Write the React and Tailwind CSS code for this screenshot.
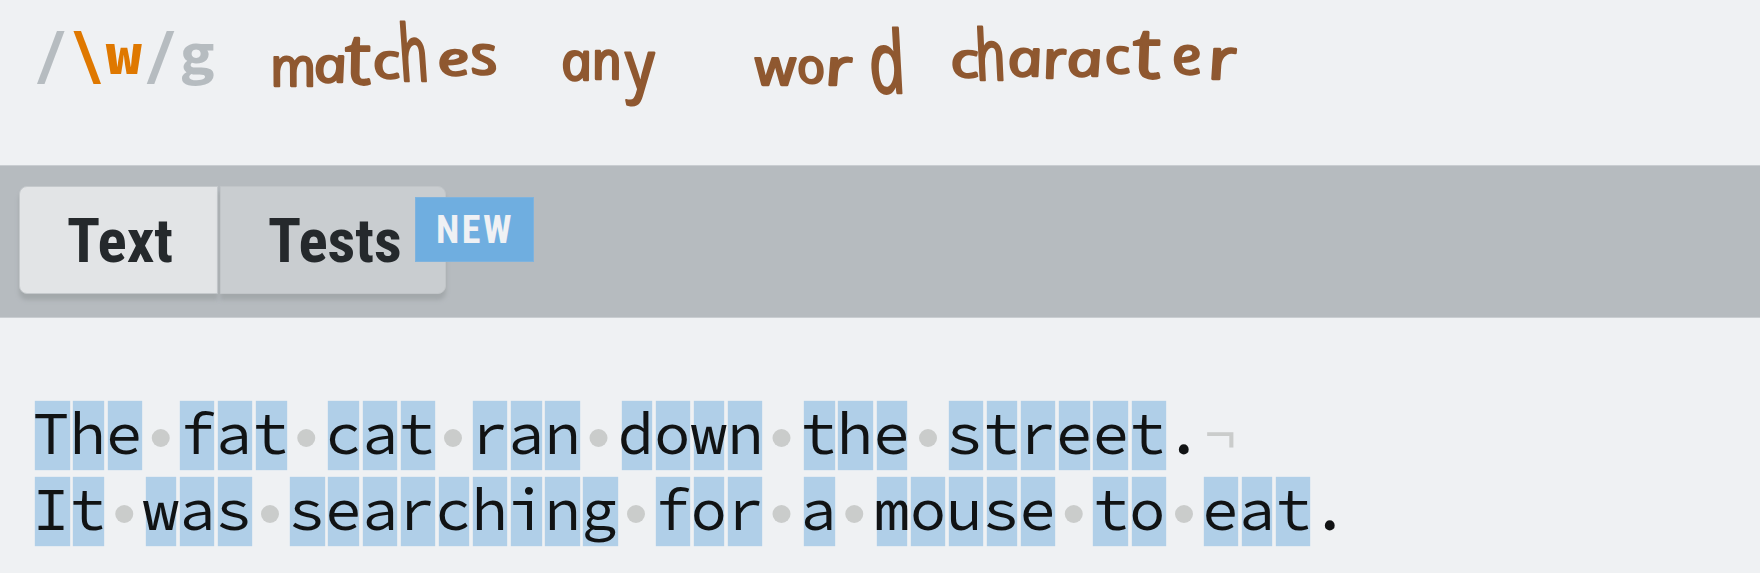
const UNIT = 3.807;
const MONO = "font-['Source_Code_Pro','Noto_Sans_Mono_CJK_SC','Liberation_Mono',monospace]";

const LINES = [
  'The fat cat ran down the street.¬',
  'It was searching for a mouse to eat.',
];

// Each letter: [character, x, baseline, width, size]
const WORDS = [
  [['m', 271, 86, 46, 54], ['a', 315, 82, 33, 48], ['t', 348, 84, 25, 70], ['c', 375, 78, 27, 48], ['h', 402, 81, 30, 78], ['e', 440, 75, 32, 46], ['s', 474, 74, 27, 54]],
  [['a', 563, 80, 31, 53], ['n', 594, 79, 30, 52], ['y', 627, 89, 29, 68]],
  [['w', 756, 85, 41, 50], ['o', 798, 83, 28, 48], ['r', 826, 85, 27, 50], ['d', 870, 93, 37, 86]],
  [['c', 953, 77, 28, 48], ['h', 978, 80, 31, 70], ['a', 1010, 76, 35, 50], ['r', 1045, 78, 24, 52], ['a', 1069, 76, 36, 48], ['c', 1108, 73, 25, 48], ['t', 1137, 78, 27, 70], ['e', 1175, 74, 30, 52], ['r', 1210, 79, 29, 56]],
];

function Note() {
  return (
    <svg className="absolute left-0 top-0 h-[130px] w-[1280px] overflow-visible" viewBox="0 0 1280 130">
      <g
        className="fill-[#8f5830] stroke-[#8f5830] font-['Open_Sans',sans-serif] italic font-normal"
        strokeWidth="2.4"
        strokeLinejoin="round"
        transform="translate(-16 0) skewX(12)"
      >
        {WORDS.map((word, i) => (
          <text key={i}>
            {word.map(([ch, x, y, w, size], j) => (
              <tspan key={j} x={x} y={y} fontSize={size} textLength={w} lengthAdjust="spacingAndGlyphs">
                {ch}
              </tspan>
            ))}
          </text>
        ))}
      </g>
    </svg>
  );
}

function Glyph({ ch, index }) {
  const start = Math.round(index * 9.6);
  const width = (Math.round((index + 1) * 9.6) - start) * UNIT;
  const shift = (index * 9.6 - start) * UNIT - 2.6;
  const isWord = /\w/.test(ch);
  return (
    <span className="flex h-[69px] shrink-0 pr-[3.8px]" style={{ width }}>
      <span className={`flex w-full ${isWord ? 'bg-[#b0cfe8] shadow-[0_0_1px_#b0cfe8]' : ''}`}>
        {ch === ' ' ? (
          <span
            className="mt-[28px] size-[18px] shrink-0 rounded-full bg-[#cacccb]"
            style={{ transform: `translateX(${shift + 9.1}px)` }}
          />
        ) : (
          <span
            className={`relative z-10 w-[36.55px] shrink-0 text-center leading-[63px] ${ch === '¬' ? 'text-[#cacccb]' : 'text-[#111314]'}`}
            style={{ transform: `translateX(${shift}px)` }}
          >
            {ch}
          </span>
        )}
      </span>
    </span>
  );
}

export default function App() {
  return (
    <div className="flex h-[573px] w-[1760px] flex-col overflow-hidden bg-[#eff1f3]">
      <header className="relative h-[165px] shrink-0 pl-[32.5px] pt-[15px]">
        <div className={`${MONO} flex text-[60.9px] font-bold leading-[76px] text-[#b6bcc0]`}>
          <span>/</span>
          <span className="text-[#df7800]">\w</span>
          <span>/g</span>
        </div>
        <Note />
      </header>
      <nav className="flex h-[153px] shrink-0 items-start border-y border-[#c9cdd1] bg-[#b6bbbf] pl-[19px] pt-[20px] font-['Roboto_Condensed','Roboto',sans-serif] font-bold text-[#25292c]">
        <button className="h-[108px] w-[199px] rounded-l-[8px] border border-[#c5c9cc] bg-[#e2e4e6] pl-[3px] text-[61px] leading-[109px] shadow-[0_6px_4px_#a3a8ab] [font-stretch:75%]">
          Text
        </button>
        <button className="relative ml-[2px] h-[108px] w-[226px] rounded-r-[8px] border border-[#c1c5c8] bg-[#c9cdd0] pl-[47px] text-left text-[61px] leading-[109px] shadow-[0_6px_4px_#a3a8ab] [font-stretch:75%]">
          Tests
          <span className="absolute left-[194px] top-[10px] h-[65px] w-[119px] border border-[#7fb3de] bg-[#6faee0] pl-[20px] text-[38px] leading-[64px] tracking-[2.5px] text-[#eff1f4]">
            NEW
          </span>
        </button>
      </nav>
      <main className={`${MONO} flex flex-col gap-[7px] pl-[35.4px] pt-[83px] text-[60.9px]`}>
        {LINES.map((line) => (
          <div key={line} className="flex">
            {[...line].map((ch, i) => (
              <Glyph key={i} ch={ch} index={i} />
            ))}
          </div>
        ))}
      </main>
    </div>
  );
}
